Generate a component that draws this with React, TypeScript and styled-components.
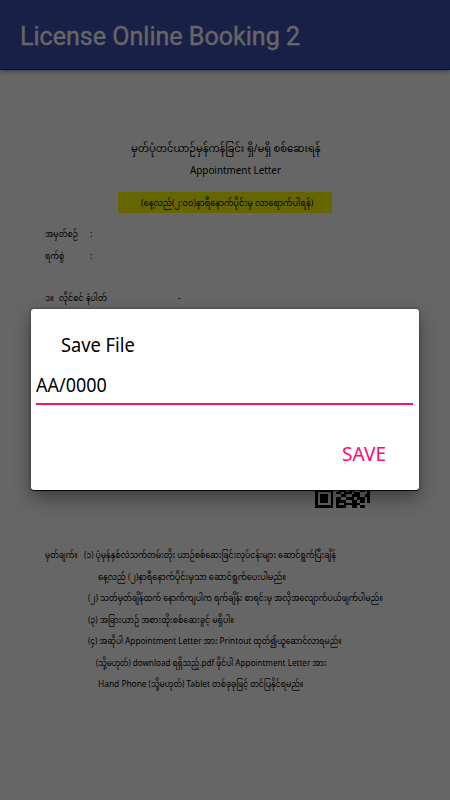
import React, { useLayoutEffect, useRef, useState } from "react";
import styled, { createGlobalStyle } from "styled-components";

const GlobalStyle = createGlobalStyle`
  * { box-sizing: border-box; }
  body { margin: 0; background: #fff; }
`;

const Screen = styled.div`
  position: relative;
  width: 450px;
  height: 800px;
  overflow: hidden;
  background: #fff;
`;

const AppBar = styled.header`
  position: relative;
  display: flex;
  align-items: center;
  height: 70px;
  padding: 3px 20px 0;
  background: #3f51b5;
  border-bottom: 1px solid #0a24ae;
  box-shadow: 0 1px 5px rgba(0, 0, 0, 0.45);
  color: #fff;
  font: 400 25.5px/32px Roboto, sans-serif;
  -webkit-text-stroke: 0.3px #fff;
`;

const Document = styled.main`
  display: flex;
  flex-direction: column;
  padding: 67px 45px 0;
  color: #000;
  font: 9px/22px "Noto Sans", "Noto Sans Myanmar", Padauk, sans-serif;
`;

const Heading = styled.div`
  display: flex;
  flex-direction: column;
  align-items: center;
  font-size: 11px;
  padding-left: 1px;
`;

const Subheading = styled.div`
  padding-left: 20px;
  font-size: 10.5px;
`;

const Latin = styled.span`
  font-size: 9.8px;
`;

const Banner = styled.div`
  display: flex;
  align-items: center;
  justify-content: center;
  width: 214px;
  height: 21px;
  margin: 11px 0 0 73px;
  padding-left: 3px;
  background: #ff0;
  font-size: 8.5px;
`;

const Fields = styled.div`
  display: grid;
  grid-template-columns: 45px auto;
  grid-auto-rows: 22px;
  margin-top: 10px;
`;

const LicenseRow = styled.div`
  display: grid;
  grid-template-columns: 14px 119px auto;
  margin-top: 20px;
  height: 22px;
`;

const QrSlot = styled.div`
  display: flex;
  height: 57px;
  margin: 142px 0 0 270px;
`;

const Notes = styled.div`
  display: flex;
  flex-direction: column;
  margin-top: 36px;
`;

const NoteRow = styled.div<{ $indent: number }>`
  display: flex;
  gap: 6px;
  height: 21.5px;
  line-height: 22px;
  padding-left: ${(p) => p.$indent}px;
`;

const FitBox = styled.span<{ $width: number }>`
  display: block;
  flex: none;
  width: ${(p) => p.$width}px;
  white-space: pre;
`;

const FitInner = styled.span`
  display: inline-block;
  transform-origin: 0 50%;
`;

/* A single line of text squeezed or stretched to a given column width. */
function Fit({ width, children }: { width: number; children: React.ReactNode }) {
  const ref = useRef<HTMLSpanElement>(null);
  const [scale, setScale] = useState(1);
  useLayoutEffect(() => {
    if (ref.current && ref.current.offsetWidth) setScale(width / ref.current.offsetWidth);
  }, [width]);
  return (
    <FitBox $width={width}>
      <FitInner ref={ref} style={{ transform: `scaleX(${scale})` }}>
        {children}
      </FitInner>
    </FitBox>
  );
}

/* Latin words are set slightly larger than the Burmese around them. */
function Mixed({ text }: { text: string }) {
  return (
    <>
      {text.split(/(\.?[A-Za-z]+(?: [A-Za-z]+)*)/).map((part, i) =>
        i % 2 ? <Latin key={i}>{part}</Latin> : part
      )}
    </>
  );
}

const Scrim = styled.div`
  position: absolute;
  inset: 0;
  display: flex;
  flex-direction: column;
  align-items: center;
  padding-top: 309px;
  background: rgba(0, 0, 0, 0.6);
`;

const Dialog = styled.section`
  display: flex;
  flex-direction: column;
  width: 388px;
  height: 181px;
  padding: 22px 5px 0;
  background: #fff;
  border-radius: 3px;
  box-shadow: 0 1px 0 rgba(0, 0, 0, 0.8), 0 8px 18px rgba(0, 0, 0, 0.4), 0 0 3px rgba(0, 0, 0, 0.4);
  color: #000;
  font: 20px/28px "Noto Sans", sans-serif;
`;

const DialogTitle = styled.div`
  padding-left: 25px;
`;

const Field = styled.div`
  height: 46px;
  padding-top: 12px;
  margin-right: 1px;
  border-bottom: 2px solid #ff0a6e;
`;

const Actions = styled.div`
  display: flex;
  justify-content: flex-end;
  padding: 35px 28px 0 0;
  color: #ff0a6e;
`;

const QR_ROWS = [
  "111111101011101011101",
  "100000101101011001111",
  "101110100110101110010",
  "100000101101011001011",
  "101110101011010011010",
  "101110100101101100101",
  "101110101011010111110",
  "100000101101001001010",
  "111111101101010110101",
  "000000001011011001011",
  "110101110100101101010",
  "011010001011010010101",
  "101101110101101101011",
  "000000000110101101101",
  "111111100111011001101",
  "100000101101110110001",
  "101110100011001110011",
  "101110101100111011101",
  "101110101111001101101",
  "100000101001111110000",
  "111111101111001101100",
];

function QrCode() {
  return (
    <svg width="55" height="57" viewBox="0 0 21 21" preserveAspectRatio="none" shapeRendering="crispEdges">
      {QR_ROWS.flatMap((row, y) =>
        [...row].map((cell, x) =>
          cell === "1" ? <rect key={`${x}-${y}`} x={x} y={y} width="1" height="1" /> : null
        )
      )}
    </svg>
  );
}

const NOTES = [
  { indent: 53, width: 188, text: "နေ့လည် (၂)နာရီနောက်ပိုင်းမှသာ ဆောင်ရွက်ပေးပါမည်။" },
  { indent: 43, width: 295, text: "(၂) သတ်မှတ်ချိန်ထက် နောက်ကျပါက ရက်ချိန်း စာရင်းမှ အလိုအလျောက်ပယ်ဖျက်ပါမည်။" },
  { indent: 43, width: 146, text: "(၃) အခြားယာဉ် အစားထိုးစစ်ဆေးခွင့် မရှိပါ။" },
  { indent: 43, width: 254, text: "(၄) အဆိုပါ Appointment Letter အား Printout ထုတ်၍ယူဆောင်လာရမည်။" },
  { indent: 51, width: 230, text: "(သို့မဟုတ်) download ရရှိသည့်.pdf ဖိုင်ပါ Appointment Letter အား" },
  { indent: 53, width: 205, text: "Hand Phone (သို့မဟုတ်) Tablet တစ်ခုခုဖြင့် တင်ပြနိုင်ရမည်။" },
];

export default function App() {
  return (
    <Screen>
      <GlobalStyle />
      <AppBar>
        <Fit width={280}>License Online Booking 2</Fit>
      </AppBar>
      <Document>
        <Heading>
          <Fit width={190}>မှတ်ပုံတင်ယာဉ်မှန်ကန်ခြင်း ရှိ/မရှိ စစ်ဆေးရန်</Fit>
          <Subheading>
            <Fit width={91}>Appointment Letter</Fit>
          </Subheading>
        </Heading>
        <Banner>
          <Fit width={172}>(နေ့လည်(၂:၀၀)နာရီနောက်ပိုင်းမှ လာရောက်ပါရန်)</Fit>
        </Banner>
        <Fields>
          <Fit width={33}>အမှတ်စဉ်</Fit>
          <Latin>:</Latin>
          <Fit width={19}>ရက်စွဲ</Fit>
          <Latin>:</Latin>
        </Fields>
        <LicenseRow>
          <Fit width={9}>၁။</Fit>
          <Fit width={48}>လိုင်စင် နံပါတ်</Fit>
          <span>-</span>
        </LicenseRow>
        <QrSlot>
          <QrCode />
        </QrSlot>
        <Notes>
          <NoteRow $indent={0}>
            <Fit width={33}>မှတ်ချက်။</Fit>
            <Fit width={252}>(၁) ပုံမှန်နှစ်လဲသက်တမ်းတိုး ယာဉ်စစ်ဆေးခြင်းလုပ်ငန်းများ ဆောင်ရွက်ပြီးချိန်</Fit>
          </NoteRow>
          {NOTES.map((note) => (
            <NoteRow key={note.text} $indent={note.indent}>
              <Fit width={note.width}>
                <Mixed text={note.text} />
              </Fit>
            </NoteRow>
          ))}
        </Notes>
      </Document>
      <Scrim>
        <Dialog>
          <DialogTitle>
            <Fit width={74}>Save File</Fit>
          </DialogTitle>
          <Field>
            <Fit width={71}>AA/0000</Fit>
          </Field>
          <Actions>
            <Fit width={44}>SAVE</Fit>
          </Actions>
        </Dialog>
      </Scrim>
    </Screen>
  );
}
